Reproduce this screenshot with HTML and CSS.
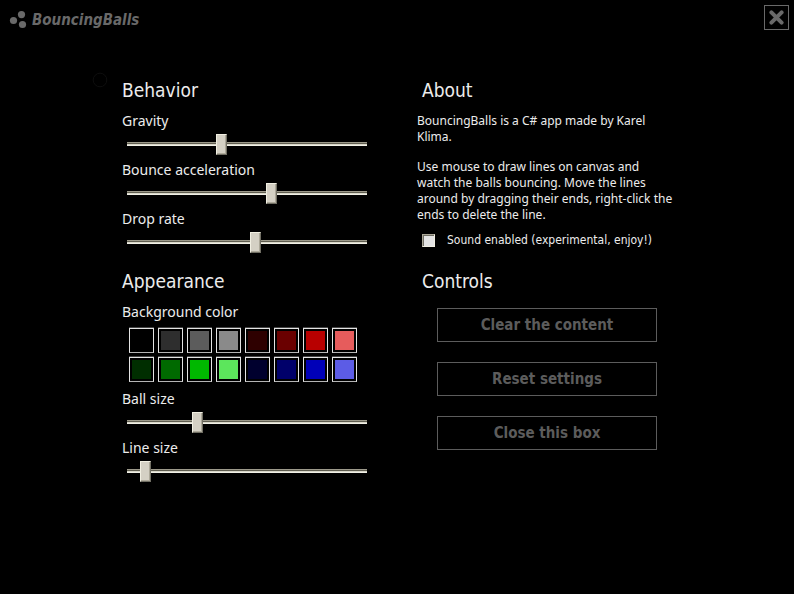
FILE: index.html
```html
<!DOCTYPE html>
<html lang="en">
<head>
<meta charset="utf-8">
<meta name="viewport" content="width=device-width, initial-scale=1">
<title>BouncingBalls</title>
<link rel="stylesheet" href="styles.css">
</head>
<body>
<svg class="ball" viewBox="0 0 16 16" aria-hidden="true"><circle cx="8" cy="8" r="6.8"/></svg>
<header class="bar">
  <div class="brand">
    <svg class="logo" viewBox="0 0 18 18" aria-hidden="true"><circle cx="4.5" cy="9.5" r="3.6"/><circle cx="12.5" cy="3.6" r="3.6"/><circle cx="13.5" cy="13.5" r="3.6"/></svg>
    <span>BouncingBalls</span>
  </div>
  <button class="close" type="button" aria-label="Close">
    <svg viewBox="0 0 15 15" aria-hidden="true"><path d="M2.4 2.4 12.6 12.6M12.6 2.4 2.4 12.6"/></svg>
  </button>
</header>
<main class="panels">
  <section class="panel">
    <h2>Behavior</h2>
    <div class="field"><label for="gravity">Gravity</label><input id="gravity" type="range" max="229" value="89"></div>
    <div class="field"><label for="bounce">Bounce acceleration</label><input id="bounce" type="range" max="229" value="139"></div>
    <div class="field"><label for="drop">Drop rate</label><input id="drop" type="range" max="229" value="123"></div>
  </section>
  <section class="panel about">
    <h2>About</h2>
    <p>BouncingBalls is a C# app made by Karel<br>Klima.</p>
    <p>Use mouse to draw lines on canvas and<br>watch the balls bouncing. Move the lines<br>around by dragging their ends, right-click the<br>ends to delete the line.</p>
    <label class="sound"><input type="checkbox">Sound enabled (experimental, enjoy!)</label>
  </section>
  <section class="panel">
    <h2>Appearance</h2>
    <div class="legend" id="bg-label">Background color</div>
    <div class="swatches" role="group" aria-labelledby="bg-label">
      <button type="button" class="swatch black" aria-label="Black"></button>
      <button type="button" class="swatch gray-1" aria-label="Dark gray"></button>
      <button type="button" class="swatch gray-2" aria-label="Gray"></button>
      <button type="button" class="swatch gray-3" aria-label="Light gray"></button>
      <button type="button" class="swatch red-1" aria-label="Darkest red"></button>
      <button type="button" class="swatch red-2" aria-label="Dark red"></button>
      <button type="button" class="swatch red-3" aria-label="Red"></button>
      <button type="button" class="swatch red-4" aria-label="Light red"></button>
      <button type="button" class="swatch green-1" aria-label="Darkest green"></button>
      <button type="button" class="swatch green-2" aria-label="Dark green"></button>
      <button type="button" class="swatch green-3" aria-label="Green"></button>
      <button type="button" class="swatch green-4" aria-label="Light green"></button>
      <button type="button" class="swatch blue-1" aria-label="Darkest blue"></button>
      <button type="button" class="swatch blue-2" aria-label="Dark blue"></button>
      <button type="button" class="swatch blue-3" aria-label="Blue"></button>
      <button type="button" class="swatch blue-4" aria-label="Light blue"></button>
    </div>
    <div class="field"><label for="ball">Ball size</label><input id="ball" type="range" max="229" value="65"></div>
    <div class="field"><label for="line">Line size</label><input id="line" type="range" max="229" value="13"></div>
  </section>
  <section class="panel">
    <h2>Controls</h2>
    <div class="actions">
      <button type="button">Clear the content</button>
      <button type="button">Reset settings</button>
      <button type="button">Close this box</button>
    </div>
  </section>
</main>
</body>
</html>
```
FILE: styles.css
```css
* { box-sizing: border-box; }

body {
  margin: 0;
  background: #000;
  color: #ececec;
  font-family: "Noto Sans", "DejaVu Sans", sans-serif;
  font-size: 14px;
}

button { cursor: pointer; }

h2, .brand, .sound, .actions button {
  font-family: "DejaVu Sans Condensed", "DejaVu Sans", sans-serif;
}

.ball {
  position: absolute;
  left: 92px;
  top: 72px;
  width: 16px;
  height: 16px;
  fill: none;
  stroke: #0e0e0e;
}

.bar {
  display: flex;
  justify-content: space-between;
  align-items: flex-start;
  padding: 5px 5px 0 9px;
}

.brand {
  display: flex;
  align-items: center;
  gap: 5px;
  height: 30px;
  color: #696969;
  font-size: 15px;
  font-weight: bold;
  font-style: italic;
}

.logo { width: 18px; height: 18px; fill: #696969; }

.close {
  display: grid;
  place-items: center;
  width: 25px;
  height: 25px;
  padding: 0;
  border: 1px solid #696969;
  background: #000;
}

.close svg {
  width: 15px;
  height: 15px;
  fill: none;
  stroke: #696969;
  stroke-width: 4;
  stroke-linecap: round;
}

.panels {
  display: grid;
  grid-template-columns: 250px 260px;
  column-gap: 50px;
  row-gap: 10px;
  justify-content: center;
  padding: 40px 0;
}

h2 {
  margin: 0 0 4px 5px;
  font-size: 19px;
  font-weight: normal;
  line-height: 30px;
}

.field { margin-bottom: 4px; }

.field label, .legend {
  display: block;
  padding-left: 5px;
  line-height: 24px;
}

.field input {
  appearance: none;
  display: block;
  width: 240px;
  height: 21px;
  margin: 0 0 0 10px;
  background: transparent;
}

.field input::-webkit-slider-runnable-track {
  height: 4px;
  background: linear-gradient(#9c998a 1px, #5f5d50 1px 2px, #d8d6c8 2px 3px, #f0efe6 3px);
}

.field input::-webkit-slider-thumb {
  appearance: none;
  width: 11px;
  height: 21px;
  margin-top: -8px;
  border: 1px solid;
  border-color: #f1efe2 #716f64 #716f64 #f1efe2;
  background: #d4d0c4;
  box-shadow: inset -1px -1px #aca899;
}

.about p {
  margin: 0 0 14px;
  font-size: 12px;
  line-height: 16px;
  white-space: nowrap;
}

.about h2 { margin-bottom: 8px; }

.about p + p { margin-bottom: 9px; }

.sound {
  display: flex;
  align-items: center;
  gap: 12px;
  margin-left: 5px;
  font-size: 12px;
  line-height: 16px;
  white-space: nowrap;
}

.sound input {
  appearance: none;
  width: 13px;
  height: 13px;
  margin: 0;
  border: 1px solid;
  border-color: #aca899 #f1efe2 #f1efe2 #aca899;
  background: #e4e4e4;
  box-shadow: inset 1px 1px #716f64;
}

.swatches {
  display: grid;
  grid-template-columns: repeat(8, 25px);
  gap: 4px;
  margin: 4px 0 5px 12px;
}

.swatch {
  height: 25px;
  padding: 2px;
  border: 1px solid #e4e4e4;
  border-bottom-color: #b4b4b4;
  background-color: #000;
  background-clip: content-box;
  box-shadow: 0 -1px #444;
}

.black { background-color: #000; }
.gray-1 { background-color: #2e2e2e; }
.gray-2 { background-color: #5c5c5c; }
.gray-3 { background-color: #8a8a8a; }
.red-1 { background-color: #2e0000; }
.red-2 { background-color: #6a0000; }
.red-3 { background-color: #b80000; }
.red-4 { background-color: #e65c5c; }
.green-1 { background-color: #002e00; }
.green-2 { background-color: #006a00; }
.green-3 { background-color: #00b800; }
.green-4 { background-color: #5ce65c; }
.blue-1 { background-color: #00002e; }
.blue-2 { background-color: #00006a; }
.blue-3 { background-color: #0000b8; }
.blue-4 { background-color: #5c5ce6; }

.actions {
  display: grid;
  gap: 20px;
  padding: 8px 20px 0;
}

.actions button {
  height: 34px;
  border: 1px solid #5c5c5c;
  background: #000;
  color: #5c5c5c;
  font-size: 15px;
  font-weight: bold;
}
```
